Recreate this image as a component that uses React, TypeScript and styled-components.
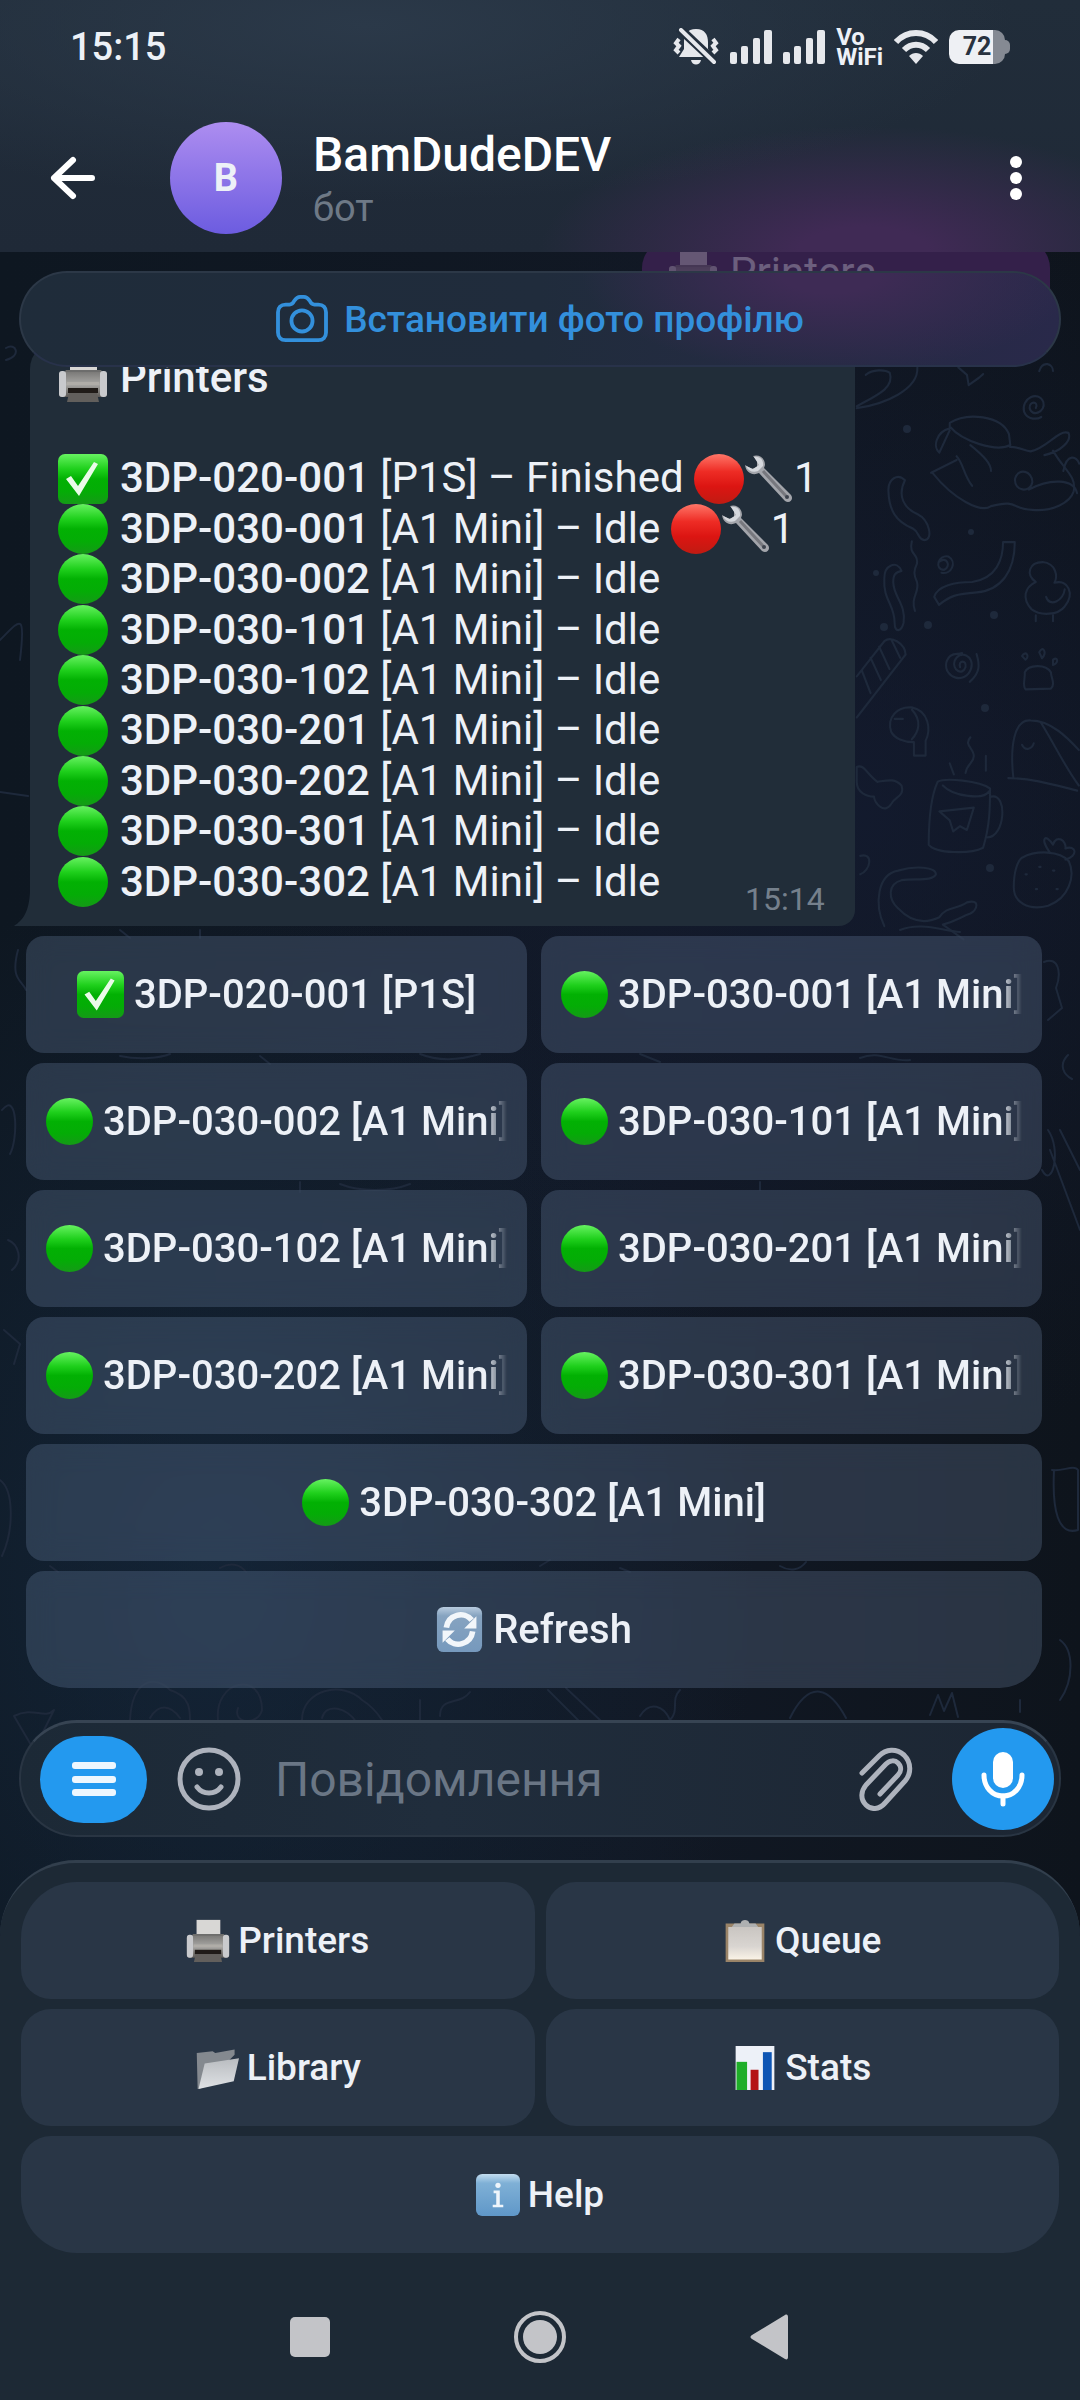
import * as React from "react";
import styled, { createGlobalStyle, css } from "styled-components";

type EmojiName =
  | "check"
  | "green"
  | "red"
  | "wrench"
  | "printer"
  | "refresh"
  | "clipboard"
  | "folder"
  | "chart"
  | "info";

interface IPrinter {
  name: string;
  model: string;
  status: string;
  emoji: EmojiName;
  alerts?: number;
}

const printers: IPrinter[] = [
  { name: "3DP-020-001", model: "P1S", status: "Finished", emoji: "check", alerts: 1 },
  { name: "3DP-030-001", model: "A1 Mini", status: "Idle", emoji: "green", alerts: 1 },
  { name: "3DP-030-002", model: "A1 Mini", status: "Idle", emoji: "green" },
  { name: "3DP-030-101", model: "A1 Mini", status: "Idle", emoji: "green" },
  { name: "3DP-030-102", model: "A1 Mini", status: "Idle", emoji: "green" },
  { name: "3DP-030-201", model: "A1 Mini", status: "Idle", emoji: "green" },
  { name: "3DP-030-202", model: "A1 Mini", status: "Idle", emoji: "green" },
  { name: "3DP-030-301", model: "A1 Mini", status: "Idle", emoji: "green" },
  { name: "3DP-030-302", model: "A1 Mini", status: "Idle", emoji: "green" }
];

const menu: { label: string; emoji: EmojiName }[] = [
  { label: "Printers", emoji: "printer" },
  { label: "Queue", emoji: "clipboard" },
  { label: "Library", emoji: "folder" },
  { label: "Stats", emoji: "chart" },
  { label: "Help", emoji: "info" }
];

const GlobalStyle = createGlobalStyle`
  * {
    box-sizing: border-box;
  }
  body {
    margin: 0;
    background: #101924;
    font-family: Roboto, "Noto Sans", sans-serif;
    color: #edf1f7;
  }
  button {
    border: 0;
    padding: 0;
    background: none;
    color: inherit;
    font: inherit;
    cursor: pointer;
  }
  svg {
    display: block;
    flex-shrink: 0;
  }
`;

const Screen = styled.div`
  position: relative;
  display: flex;
  flex-direction: column;
  min-height: 100vh;
  overflow: hidden;
  background:
    radial-gradient(ellipse 50% 30% at 20% 66%, rgba(24, 48, 74, 0.5), transparent),
    radial-gradient(ellipse 60% 26% at 80% 34%, rgba(22, 30, 58, 0.5), transparent),
    linear-gradient(90deg, #0e1721, #111824 60%, #0e141c);
`;

const Wallpaper = styled.svg`
  position: absolute;
  top: 0;
  left: 0;
  width: 100%;
  height: auto;
  fill: none;
  stroke: #1e293b;
  stroke-linecap: round;
  stroke-linejoin: round;
`;

const Top = styled.header`
  position: relative;
  background:
    radial-gradient(ellipse 30% 50% at 80% 100%, #402a55 20%, rgba(58, 41, 82, 0) 100%),
    radial-gradient(ellipse 60% 70% at 34% 10%, #2b3949, rgba(43, 57, 73, 0)),
    linear-gradient(#212d3a, #1f2937);
`;

const StatusBar = styled.div`
  display: flex;
  align-items: center;
  justify-content: space-between;
  height: 104px;
  padding: 0 75px 10px 70px;
  font-size: 38px;
  font-weight: 500;
`;

const StatusIcons = styled.div`
  display: flex;
  align-items: center;
  gap: 11px;
`;

const VoWifi = styled.div`
  font-size: 24px;
  font-weight: 700;
  line-height: 20px;
`;

const Battery = styled.div`
  position: relative;
  width: 56px;
  height: 34px;
  border-radius: 10px;
  background: linear-gradient(90deg, #eef0f4 78%, #858a93 78%);
  color: #28323f;
  font-size: 25px;
  font-weight: 700;
  line-height: 34px;
  text-align: center;
  &::after {
    content: "";
    position: absolute;
    top: 10px;
    left: 100%;
    width: 5px;
    height: 14px;
    border-radius: 0 6px 6px 0;
    background: #858a93;
  }
`;

const ChatBar = styled.div`
  display: flex;
  align-items: center;
  height: 148px;
  padding: 0 54px 0 48px;
`;

const Avatar = styled.div`
  display: flex;
  align-items: center;
  justify-content: center;
  width: 112px;
  height: 112px;
  margin: 0 31px 0 74px;
  border-radius: 50%;
  background: linear-gradient(#ad8df0, #6c5ce0);
  font-size: 38px;
  font-weight: 700;
`;

const ChatTitle = styled.div`
  flex: 1;
  padding-top: 4px;
  h1 {
    margin: 0;
    font-size: 48px;
    font-weight: 500;
    line-height: 56px;
    color: #fff;
  }
  p {
    margin: 0;
    font-size: 38px;
    line-height: 50px;
    color: #6e7986;
  }
`;

const Chat = styled.main`
  position: relative;
  display: flex;
  flex: 1;
  flex-direction: column;
  justify-content: flex-end;
  overflow: hidden;
  padding: 0 38px 32px 26px;
`;

const PhotoButton = styled.button`
  position: absolute;
  z-index: 1;
  top: 19px;
  left: 19px;
  right: 19px;
  display: flex;
  align-items: center;
  justify-content: center;
  gap: 16px;
  height: 96px;
  border: 2px solid #2c3847;
  border-bottom-color: #28324a;
  border-radius: 48px;
  background:
    radial-gradient(ellipse 24% 110% at 78% 0%, #3e2b55 20%, rgba(62, 43, 85, 0)),
    linear-gradient(90deg, #1f2c3a, #202c3c 50%, #29294a);
  color: #3390dc;
  font-size: 37px;
  font-weight: 500;
`;

const Outgoing = styled.div`
  display: flex;
  align-items: center;
  align-self: flex-end;
  gap: 12px;
  width: 408px;
  height: 90px;
  margin: -20px -8px 11px 0;
  padding: 0 26px 24px;
  border-radius: 28px;
  background: #34204a;
  font-size: 42px;
  line-height: 1.2;
  span,
  svg {
    opacity: 0.3;
  }
`;

const Bubble = styled.article`
  position: relative;
  align-self: flex-start;
  margin: 0 0 10px 4px;
  padding: 12px 37px 19px 28px;
  border-radius: 28px 16px 16px 0;
  background: #212d39;
  font-size: 42px;
  line-height: 1.2;
`;

const Tail = styled.svg`
  position: absolute;
  right: 100%;
  bottom: 0;
`;

const Line = styled.div`
  display: flex;
  align-items: center;
  white-space: pre;
  min-height: 1.2em;
  b {
    font-weight: 500;
  }
  > svg:first-child {
    margin-right: 12px;
  }
`;

const Time = styled.time`
  position: absolute;
  right: 30px;
  bottom: 8px;
  font-size: 32px;
  color: #75808c;
`;

const InlineKeyboard = styled.div`
  display: grid;
  grid-template-columns: 1fr 1fr;
  gap: 10px 14px;
`;

const wide = css`
  grid-column: 1 / -1;
`;

const InlineButton = styled.button<{ $wide?: boolean; $last?: boolean }>`
  display: flex;
  align-items: center;
  justify-content: center;
  min-width: 0;
  height: 117px;
  padding: 0 20px;
  border-radius: ${({ $last }) => ($last ? "18px 18px 42px 42px" : "18px")};
  background: rgba(125, 148, 184, 0.25);
  backdrop-filter: blur(14px);
  font-size: 40px;
  font-weight: 500;
  ${({ $wide }) => $wide && wide}
`;

// Labels that do not fit are faded out at the right edge
const ButtonLabel = styled.span<{ $fade?: boolean }>`
  display: flex;
  align-items: center;
  gap: 10px;
  min-width: 0;
  overflow: hidden;
  white-space: nowrap;
  ${({ $fade }) =>
    $fade &&
    css`
      mask-image: linear-gradient(to right, #000 calc(100% - 22px), transparent);
    `}
`;

const Composer = styled.form`
  position: relative;
  display: flex;
  align-items: center;
  height: 117px;
  margin: 0 19px 23px;
  padding: 0 5px 0 19px;
  border: 2px solid #293543;
  border-top: 3px solid #374453;
  border-radius: 58px;
  background: linear-gradient(90deg, #1c2936, #202d3c 40%, #1c2633);
`;

const MenuButton = styled.button`
  display: flex;
  align-items: center;
  justify-content: center;
  width: 107px;
  height: 87px;
  border-radius: 44px;
  background: #2399ef;
`;

const IconButton = styled.button`
  color: #aeb3bd;
`;

const MessageInput = styled.input`
  flex: 1;
  min-width: 0;
  margin: 0 20px 0 34px;
  padding: 0;
  border: 0;
  outline: 0;
  background: none;
  color: inherit;
  font: inherit;
  font-size: 48px;
  &::placeholder {
    color: #6a7685;
    opacity: 1;
  }
`;

const EmojiButton = styled(IconButton)`
  margin-left: 30px;
`;

const MicButton = styled(MenuButton)`
  width: 102px;
  height: 102px;
  margin-left: 38px;
  border-radius: 50%;
`;

const Panel = styled.footer`
  position: relative;
  padding: 19px 21px 0;
  border-top: 3px solid #323f4d;
  border-radius: 76px 76px 0 0;
  background: #1d2935;
`;

const ReplyKeyboard = styled.div`
  display: grid;
  grid-template-columns: 1fr 1fr;
  gap: 10px 11px;
`;

const ReplyButton = styled.button`
  display: flex;
  align-items: center;
  justify-content: center;
  gap: 8px;
  height: 117px;
  border-radius: 30px;
  background: #293646;
  font-size: 37px;
  font-weight: 500;
  &:first-child {
    border-top-left-radius: 56px;
  }
  &:nth-child(2) {
    border-top-right-radius: 56px;
  }
  &:last-child {
    ${wide}
    border-bottom-left-radius: 56px;
    border-bottom-right-radius: 56px;
  }
`;

const NavBar = styled.nav`
  display: flex;
  align-items: center;
  justify-content: center;
  gap: 176px;
  height: 147px;
  padding-top: 20px;
  fill: #c3c4c8;
`;

const EmojiDefs = () => (
  <svg width="0" height="0" aria-hidden="true">
    <defs>
      <linearGradient id="green" x2="0" y2="1">
        <stop offset="0" stopColor="#67f261" />
        <stop offset=".3" stopColor="#1fd01c" />
        <stop offset=".5" stopColor="#02b103" />
        <stop offset=".75" stopColor="#04ac06" />
        <stop offset="1" stopColor="#159a17" />
      </linearGradient>
      <linearGradient id="red" x2="0" y2="1">
        <stop offset="0" stopColor="#ff7668" />
        <stop offset=".35" stopColor="#ee2c25" />
        <stop offset=".65" stopColor="#dc1512" />
        <stop offset="1" stopColor="#c01b12" />
      </linearGradient>
      <linearGradient id="steel" x2="0" y2="1">
        <stop offset="0" stopColor="#b9ccdf" />
        <stop offset=".2" stopColor="#86a3c0" />
        <stop offset="1" stopColor="#7699bd" />
      </linearGradient>
      <linearGradient id="blue" x2="0" y2="1">
        <stop offset="0" stopColor="#c4def0" />
        <stop offset=".22" stopColor="#7fb0d6" />
        <stop offset="1" stopColor="#5f97c8" />
      </linearGradient>
      <linearGradient id="silver" x2="0" y2="1">
        <stop offset="0" stopColor="#b9bcc0" />
        <stop offset="1" stopColor="#dfe2e5" />
      </linearGradient>
      <linearGradient id="case" x2="0" y2="1">
        <stop offset="0" stopColor="#7b7a78" />
        <stop offset=".5" stopColor="#aaa9a6" />
        <stop offset="1" stopColor="#5a5754" />
      </linearGradient>
      <linearGradient id="sheet" x2="0" y2="1">
        <stop offset="0" stopColor="#c9c5c1" />
        <stop offset=".6" stopColor="#d9d5d1" />
        <stop offset="1" stopColor="#faf3e6" />
      </linearGradient>
    </defs>
  </svg>
);

const drawings: Record<EmojiName, React.ReactNode> = {
  check: (
    <>
      <rect x="0" y="0" width="50" height="50" rx="7" fill="url(#green)" />
      <path d="M8 25l5-3 7 10L36 8l4 2-19 32z" fill="#eafbe8" />
    </>
  ),
  green: <circle cx="25" cy="25" r="25" fill="url(#green)" />,
  red: <circle cx="25" cy="25" r="25" fill="url(#red)" />,
  wrench: (
    <>
      <path
        d="M9 2c6-2 12 2 12 9l-1 3 27 27c3 4-1 9-6 6L15 19c-6 3-13 0-14-8l7 4 5-2 0-6z"
        fill="#a3a5ab"
      />
      <path d="M10 3c6-1 10 3 9 9l-5 5c-5 2-10 0-12-5l7 3 6-4z" fill="#d5d8dd" />
      <path d="M19 17l23 25" stroke="#77787e" strokeWidth="3" />
      <circle cx="43" cy="43" r="2" fill="#3d434d" />
    </>
  ),
  printer: (
    <>
      <path d="M12 1h27v20H12z" fill="#d8d7d5" />
      <path d="M8 17h35l3 4H5z" fill="#6d6d6c" />
      <rect x="1" y="19" width="48" height="25" rx="3" fill="url(#case)" />
      <rect x="1" y="18" width="7" height="26" rx="3" fill="#c9cacd" />
      <rect x="42" y="18" width="7" height="26" rx="3" fill="#c9cacd" />
      <path d="M9 29h32v3H9z" fill="#b0ada8" />
      <path d="M10 35h30v5H10z" fill="#201b18" />
      <path d="M11 40h28l2 9H9z" fill="#625f5c" />
    </>
  ),
  refresh: (
    <>
      <rect x="1" y="1" width="48" height="48" rx="7" fill="url(#steel)" />
      <path
        d="M11 23c2-14 19-18 27-8M39 27c-2 14-19 18-27 8"
        fill="none"
        stroke="#f2f6fa"
        strokeWidth="6"
      />
      <path d="M43 11v13H30zM7 39V26h13z" fill="#f2f6fa" />
    </>
  ),
  clipboard: (
    <>
      <path d="M3 5h44v44H3z" fill="#9a8468" />
      <path d="M6 9h38v37H6z" fill="url(#sheet)" />
      <path d="M10 9l3-4h7c1-5 9-5 10 0h7l3 4z" fill="#aeb0b1" />
    </>
  ),
  folder: (
    <>
      <path d="M2 8l18-2 3 2 22-4v6L7 48l-4 1z" fill="#84898f" />
      <path d="M11 20l39-6-6 26L4 49z" fill="url(#silver)" />
    </>
  ),
  chart: (
    <>
      <path d="M3 0h44v50H3z" fill="#edf1f8" />
      <path d="M4 18h12v32H4z" fill="#1eae28" />
      <path d="M20 27h9v23h-9z" fill="#b41216" />
      <path d="M34 7h10v43H34z" fill="#0d55b4" />
    </>
  ),
  info: (
    <>
      <rect x="0" y="1" width="50" height="48" rx="7" fill="url(#blue)" />
      <circle cx="25" cy="14" r="3" fill="#eef5fb" />
      <path d="M20 20h7v16h4v3H19v-3h4V23h-3z" fill="#eef5fb" />
    </>
  )
};

const Emoji = ({ name, size = 50 }: { name: EmojiName; size?: number }) => (
  <svg width={size} height={size} viewBox="0 0 50 50" aria-hidden="true">
    {drawings[name]}
  </svg>
);

const Doodles = () => (
  <Wallpaper viewBox="0 0 1080 2400" aria-hidden="true">
    <g transform="translate(540 360) scale(.3443 .37)" strokeWidth="6">
      <path d="M920 130c80-10 180-50 176-110M920 125c60-30 110-50 96-90-14-10-50-10-70 5" />
      <path d="M1215 20l25 20 5 28 30-20 12-10M1450 30c10-30 40-20 40 0" />
      <path d="M1440 130c10-20-20-20-18 0 6 26 48 10 40-16-14-34-66-10-56 26 10 24 40 20 50 14" />
      <path d="M1190 170c50-30 150-20 172 30l4 30c-40 20-140-10-176-50zM1190 185c-40 10-50 50-30 65l30-60M1136 305l74-35M1140 305c60 70 140 110 170 90 80-20 60 10 120 10 60 5 110-20 120-50 10-40-30-60-60-110M1250 230c40 30 60 50 60 70M1210 260c20 20 20 50 45 80M1365 235c30 0 40 10 60 12 50-10 80-60 110-50 10 20-20 50-70 60" />
      <path d="M1380 320c10-30 50-20 50 10-5 30-55 26-50-10zM1420 350c60-30 130-30 140 10M1520 300c10-50 40-40 46-20" />
      <path d="M1060 325c-20-20-50-5-48 30 2 50 20 80 70 100 20 10 15 30 35 32 26-2 14-54-20-70-40-16-60-50-37-92z" />
      <path d="M1145 640c10-30 60-40 110-40 70-10 90-60 90-108h34c0 80-40 130-110 136-60 4-80 10-110 34z" />
      <path d="M1080 490c-10 40 20 30 15 60-10 20-10 30 0 50 8 30-20 40-6 78" />
      <path d="M1160 545c20-16 36 12 14 22-30 0-18-42 12-36 26 14 10 50-20 44M1050 570c-14-30-50-16-50 20-4 60 30 70 30 120 0 30 20 24 26 0 8-50-30-70-30-110 0-20 6-26 24-30z" />
      <path d="M1440 600c-30-20-20-54 20-54 40 4 44 40 34 56 40-10 60 30 30 64-20 24-70 26-96 8-30-30-20-60 12-74M1470 640c10 30 50 10 54-20M1440 690v16M1490 690v16" />
      <path d="M920 855l80-95c20-16 60 6 62 36l-142 170M985 775l30 60M960 805l30 60M935 840l25 60M1020 755l26 50" />
      <path d="M1220 830c-6-20 20-20 16 0-10 26-40 6-32-16 14-34 60-14 48 20-16 44-80 26-72-16 10-30 30-20 46-26M1268 795c10 30 10 50-20 75" />
      <path d="M1410 890c-10-10 0-30-2-46 10-20 60-24 76 0 0 16 14 30 0 44zM1400 800c10-16 24 0 10 10zM1450 790c10-20 24 0 8 16zM1490 810c16-10 16 10 0 14z" />
      <path d="M1020 1005c-14-40 20-70 60-66 50 10 56 60 40 90v40h-34v-36c-30 0-56-10-66-28zM1080 945c30 30 20 60 0 80M1030 970h24" />
      <path d="M1375 1130c-10-80 0-160 50-156 60 0 110 50 140 80M1360 1130c70 0 140 20 200 34M1455 980c40 60 70 120 110 170M1400 1040c10 20 30 10 34-4" />
      <path d="M1155 1140c-20 40-26 100-26 170 20 24 120 26 158 8 20-60 20-110 20-160-30-20-130-30-152-18zM1170 1150c30 30 120 40 134 16M1310 1180c50-10 40 110-10 110M1160 1220l100-10-20 60-20-10-20 14-10-30zM1250 1020c-20 20 10 30 10 50 0 20-20 20-24 46M1190 1090l12 30M1295 1070v40" />
      <path d="M920 1100c20-10 30 20 60 40 30-4 50-10 70 10 10 30-20 30-30 50-20 30-50-4-50-20-20 0-50-10-50-40z" />
      <path d="M1000 1530c-30-60-20-140 40-150 50-14 110-10 110 10-10 20-60 10-100 16-40 10-40 50-10 76 20 20 60 50 120 24 20-30 50-20 80-40 40-10 30 20 10 30-30 10-40 20-80 30l60 40" />
      <path d="M1400 1345c40-20 110-20 136 10 20 40 0 100-60 120-60 14-100-10-100-50 0-40 10-70 24-80zM1480 1330c-30-40-10-50 10-20 10-30 40-10 36 10 30-10 40 20 0 30M1410 1390h4M1440 1430h4M1490 1380h4M1500 1430h4M1450 1370h4" />
      <path d="M930 1390c30-10 40-60 0-50" />
    </g>
    <g strokeWidth="2">
      <path d="M1044 962c14-6 18 10 12 26l6 20-14 12M1048 1130c14 20 4 60-6 40M1050 1150l30 80M1060 1130l20 40M1068 1055c-10 10-4 20 4 24" />
      <path d="M1052 1470c10 2 22-6 26 0v60c-20 6-26-20-24-60M0 640c20-20 26-30 20 20M6 348c10-6 16 8 0 12M2 1110c16-20 16 30 8 44M18 950c-8 30 4 30 8 40M0 792l28 4" />
      <path d="M1060 1640c14 10 14 40 0 60M0 1480c14 10 14 50 2 76M4 1330l16 14-6 20M8 1240c10 4 16 20 4 30" />
      <path d="M130 1720c2-40 24-46 40-30 20 6 20 20 20 30M150 1718c8-14 20-14 30 0M218 1720c-4-40 44-50 44-10-4 16-30 14-24-2M302 1720c0-30 40-40 60-20 10 6 16 14 20 20M322 1718c4-16 26-10 34 4M420 1700v20M440 1716c0-20 20-10 30-24M548 1690l30 30M566 1688l34 32M640 1716c10-16 24-10 30 4M680 1690c-10 10 0 20-10 30M790 1718c20-40 40-30 56 0M930 1715l8-20 6 16 8-18 6 24M1020 1700v12" />
      <path d="M14 1716c20-10 30 4 40-6l-20 40z" />
      <path d="M120 1056c20 4 40 2 50-2M420 1054c20 8 40 6 60 0M260 1056l10 8M300 1182v10M340 1184c20 8 50 8 70 0M120 930l10 8M200 930v8M640 1054l20 8M860 1058c20-8 30 4 50 2M760 1182v8M50 1566l8 6M220 1568c10-6 20-4 26 4M540 1566l10-6M620 1568l10 4M780 1566c10 6 20 4 26-4M900 930c20-8 40 0 60 2" />
    </g>
    <g fill="#1e293b" stroke="none">
      <circle cx="907" cy="429" r="4" />
      <circle cx="971" cy="532" r="3" />
      <circle cx="876" cy="573" r="3" />
      <circle cx="994" cy="615" r="4" />
      <circle cx="884" cy="627" r="4" />
      <circle cx="928" cy="625" r="4" />
      <circle cx="985" cy="708" r="4" />
      <circle cx="990" cy="868" r="4" />
    </g>
  </Wallpaper>
);

const Signal = () => (
  <svg width="42" height="34" viewBox="0 0 42 34" fill="#e6e8ec" aria-hidden="true">
    <rect x="0" y="22" width="7" height="12" rx="2" />
    <rect x="11" y="16" width="7" height="18" rx="2" />
    <rect x="23" y="8" width="7" height="26" rx="2" />
    <rect x="34" y="0" width="8" height="34" rx="2" />
  </svg>
);

const BellOff = () => (
  <svg width="46" height="38" viewBox="0 0 46 38" aria-hidden="true">
    <path
      d="M23 1c9 0 12 6 12 13v7l5 8H6l5-8v-7C11 7 14 1 23 1zM18 32h10c-1 6-9 6-10 0z"
      fill="#e6e8ec"
    />
    <path d="M6 0l35 33" stroke="#232f3d" strokeWidth="9" />
    <path d="M8 2l33 32" stroke="#e6e8ec" strokeWidth="4" strokeLinecap="round" />
    <path
      d="M6 11l-3 4 3 3-3 4 3 3M40 11l3 4-3 3 3 4-3 3"
      fill="none"
      stroke="#e6e8ec"
      strokeWidth="4"
    />
  </svg>
);

const Wifi = () => (
  <svg width="44" height="34" viewBox="0 0 44 34" fill="none" stroke="#e6e8ec" aria-hidden="true">
    <path d="M2 12c11-12 29-12 40 0" strokeWidth="6" />
    <path d="M10 20c7-7 17-7 24 0" strokeWidth="6" />
    <path d="M15 26c4-4 10-4 14 0l-7 8z" fill="#e6e8ec" stroke="none" />
  </svg>
);

const Smile = () => (
  <svg
    width="64"
    height="64"
    viewBox="0 0 64 64"
    fill="none"
    stroke="currentColor"
    strokeWidth="5"
    strokeLinecap="round"
  >
    <circle cx="32" cy="32" r="29" />
    <path d="M20 40c6 8 18 8 24 0" />
    <circle cx="22" cy="25" r="4" fill="currentColor" stroke="none" />
    <circle cx="42" cy="25" r="4" fill="currentColor" stroke="none" />
  </svg>
);

const PrinterLine = ({ printer }: { printer: IPrinter }) => (
  <Line>
    <Emoji name={printer.emoji} />
    <b>{printer.name}</b>
    {` [${printer.model}] – ${printer.status}`}
    {printer.alerts && (
      <>
        {" "}
        <Emoji name="red" />
        <Emoji name="wrench" />
        {printer.alerts}
      </>
    )}
  </Line>
);

export default function App() {
  return (
    <Screen>
      <GlobalStyle />
      <EmojiDefs />
      <Doodles />

      <Top>
        <StatusBar>
          <span>15:15</span>
          <StatusIcons>
            <BellOff />
            <Signal />
            <Signal />
            <VoWifi>
              Vo
              <br />
              WiFi
            </VoWifi>
            <Wifi />
            <Battery>72</Battery>
          </StatusIcons>
        </StatusBar>
        <ChatBar>
          <button type="button" aria-label="Назад">
            <svg
              width="48"
              height="48"
              viewBox="0 0 48 48"
              fill="none"
              stroke="#fff"
              strokeWidth="6"
              strokeLinecap="round"
              strokeLinejoin="round"
            >
              <path d="M44 24H6M25 6L6 24l19 18" />
            </svg>
          </button>
          <Avatar>B</Avatar>
          <ChatTitle>
            <h1>BamDudeDEV</h1>
            <p>бот</p>
          </ChatTitle>
          <button type="button" aria-label="Меню чату">
            <svg width="20" height="48" viewBox="0 0 20 48" fill="#fff">
              <circle cx="10" cy="8" r="6" />
              <circle cx="10" cy="24" r="6" />
              <circle cx="10" cy="40" r="6" />
            </svg>
          </button>
        </ChatBar>
      </Top>

      <Chat>
        <PhotoButton type="button">
          <svg
            width="52"
            height="48"
            viewBox="0 0 54 50"
            fill="none"
            stroke="currentColor"
            strokeWidth="4"
            strokeLinejoin="round"
          >
            <path d="M10 10h4c3 0 4-2 5-4 2-3 3-4 6-4h4c3 0 4 1 6 4 1 2 2 4 5 4h4c5 0 8 3 8 8v21c0 5-3 8-8 8H10c-5 0-8-3-8-8V18c0-5 3-8 8-8z" />
            <circle cx="27" cy="27" r="11" />
          </svg>
          Встановити фото профілю
        </PhotoButton>

        <Outgoing>
          <Emoji name="printer" />
          <span>Printers</span>
        </Outgoing>

        <Bubble>
          <Tail width="16" height="34" viewBox="0 0 16 34" aria-hidden="true">
            <path d="M16 0v34H0c9-6 15-14 16-34z" fill="#212d39" />
          </Tail>
          <Line>
            <Emoji name="printer" />
            <b>Printers</b>
          </Line>
          <Line />
          {printers.map(printer => (
            <PrinterLine key={printer.name} printer={printer} />
          ))}
          <Time>15:14</Time>
        </Bubble>

        <InlineKeyboard>
          {printers.map(({ name, model, emoji }, i) => {
            const last = i === printers.length - 1;
            return (
              <InlineButton key={name} type="button" $wide={last}>
                <ButtonLabel $fade={!last && model.length > 3}>
                  <Emoji name={emoji} size={47} />
                  {name} [{model}]
                </ButtonLabel>
              </InlineButton>
            );
          })}
          <InlineButton type="button" $wide $last>
            <ButtonLabel>
              <Emoji name="refresh" size={47} />
              Refresh
            </ButtonLabel>
          </InlineButton>
        </InlineKeyboard>
      </Chat>

      <Composer onSubmit={e => e.preventDefault()}>
        <MenuButton type="button" aria-label="Меню">
          <svg width="44" height="36" viewBox="0 0 44 36" fill="#eef7fe">
            <rect y="1" width="44" height="7" rx="3" />
            <rect y="15" width="44" height="7" rx="3" />
            <rect y="28" width="44" height="7" rx="3" />
          </svg>
        </MenuButton>
        <EmojiButton type="button" aria-label="Емодзі">
          <Smile />
        </EmojiButton>
        <MessageInput type="text" placeholder="Повідомлення" aria-label="Повідомлення" />
        <IconButton type="button" aria-label="Прикріпити">
          <svg
            width="56"
            height="64"
            viewBox="0 0 56 64"
            fill="none"
            stroke="currentColor"
            strokeWidth="5"
            strokeLinecap="round"
            strokeLinejoin="round"
          >
            <path d="M4 26L21 9c7-7 17-8 25-1 8 8 7 19 1 26L27 56c-6 7-14 7-19 2-6-6-5-14 0-20l20-21c4-4 9-4 12-1 4 4 3 9 0 12L22 47" />
          </svg>
        </IconButton>
        <MicButton type="button" aria-label="Голосове повідомлення">
          <svg width="44" height="56" viewBox="0 0 44 56" fill="none" stroke="#fff">
            <rect x="12" y="1" width="20" height="36" rx="10" fill="#fff" stroke="none" />
            <path d="M3 24c0 12 8 21 19 21s19-9 19-21" strokeWidth="5" strokeLinecap="round" />
            <path d="M22 45v8" strokeWidth="5" strokeLinecap="round" />
          </svg>
        </MicButton>
      </Composer>

      <Panel>
        <ReplyKeyboard>
          {menu.map(({ label, emoji }) => (
            <ReplyButton key={label} type="button">
              <Emoji name={emoji} size={44} />
              {label}
            </ReplyButton>
          ))}
        </ReplyKeyboard>
        <NavBar>
          <button type="button" aria-label="Останні програми">
            <svg width="54" height="54" viewBox="0 0 54 54">
              <rect x="7" y="7" width="40" height="40" rx="5" />
            </svg>
          </button>
          <button type="button" aria-label="Головний екран">
            <svg width="54" height="54" viewBox="0 0 54 54">
              <circle cx="27" cy="27" r="24" fill="none" stroke="#c3c4c8" strokeWidth="4" />
              <circle cx="27" cy="27" r="17" />
            </svg>
          </button>
          <button type="button" aria-label="Назад">
            <svg width="54" height="54" viewBox="0 0 54 54">
              <path d="M9 25L42 5c2-1 3 0 3 2v40c0 2-1 3-3 2L9 29c-2-1-2-3 0-4z" />
            </svg>
          </button>
        </NavBar>
      </Panel>
    </Screen>
  );
}
